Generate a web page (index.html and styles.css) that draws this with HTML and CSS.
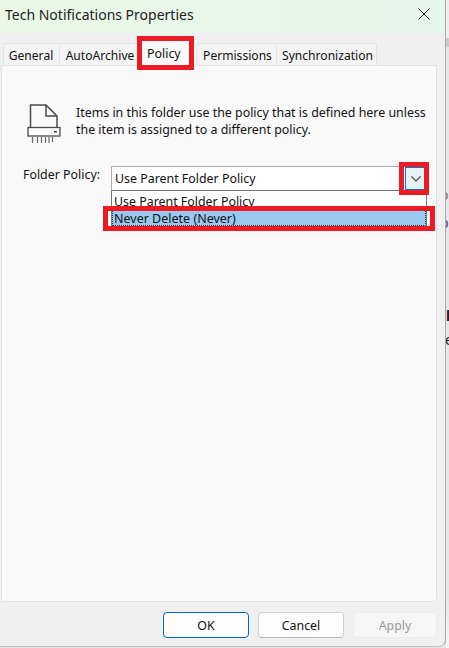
FILE: index.html
```html
<!DOCTYPE html>
<html lang="en">
<head>
    <meta charset="UTF-8">
    <title>Tech Notifications Properties</title>
    <link rel="stylesheet" href="styles.css">
</head>
<body>
    <div class="dialog">
        <div class="title-bar">
            <span class="title">Tech Notifications Properties</span>
            <svg class="close-icon" width="12" height="12" viewBox="0 0 12 12">
                <path d="M0.5 0.5L11.5 11.5M11.5 0.5L0.5 11.5" stroke="#1a1a1a" stroke-width="1" fill="none"/>
            </svg>
        </div>

        <div class="tabs">
            <div class="tab tab-general">General</div>
            <div class="tab tab-archive">AutoArchive</div>
            <div class="tab tab-active">Policy</div>
            <div class="tab tab-permissions">Permissions</div>
            <div class="tab tab-sync">Synchronization</div>
        </div>

        <div class="panel">
            <div class="info-row">
                <svg class="shredder-icon" width="34" height="40" viewBox="0 0 34 40">
                    <path d="M3.500 23V1H19L30 12V23" fill="none" stroke="#4a4a4a" stroke-width="1.5"/>
                    <path d="M19 1V12H30" fill="none" stroke="#4a4a4a" stroke-width="1.5"/>
                    <rect x="1" y="23.500" width="32" height="8.500" fill="#fff" stroke="#4a4a4a" stroke-width="1.3"/>
                    <rect x="27" y="27" width="3" height="1.500" fill="#4a4a4a"/>
                    <path d="M5.500 33V39M10.500 33V39M14.500 33V39M18.500 33V39M22 33V39M25.500 33V38" stroke="#6a6a6a" stroke-width="1.2" fill="none"/>
                </svg>
                <p class="info-text">Items in this folder use the policy that is defined here unless the item is assigned to a different policy.</p>
            </div>

            <div class="policy-row">
                <label class="policy-label">Folder Policy:</label>
                <div class="combo">
                    <div class="combo-box">
                        <span>Use Parent Folder Policy</span>
                        <span class="combo-button">
                            <svg width="10" height="6" viewBox="0 0 10 6">
                                <path d="M0.500 0.500L5 5L9.500 0.500" fill="none" stroke="#444" stroke-width="1.1"/>
                            </svg>
                        </span>
                    </div>
                    <div class="combo-list">
                        <div class="combo-option">Use Parent Folder Policy</div>
                        <div class="combo-option combo-selected">Never Delete (Never)</div>
                    </div>
                </div>
            </div>
        </div>

        <div class="buttons">
            <button class="btn btn-default">OK</button>
            <button class="btn">Cancel</button>
            <button class="btn btn-disabled">Apply</button>
        </div>

        <div class="mark mark-tab"></div>
        <div class="mark mark-arrow"></div>
        <div class="mark mark-option"></div>
    </div>

    <div class="behind">
        <div class="behind-bar"></div>
        <span class="behind-text behind-a">o</span>
        <span class="behind-text behind-b">b</span>
        <span class="behind-text behind-c">l</span>
        <span class="behind-text behind-d">e</span>
    </div>
</body>
</html>
```

FILE: styles.css
```css
html, body {
    margin: 0;
    padding: 0;
    height: 100%;
    overflow: hidden;
}
body {
    background-color: #e6e6e6;
    color: #111;
    font-family: "Noto Sans", sans-serif;
    font-size: 12.4px;
    display: flex;
}
.dialog {
    position: relative;
    width: 446px;
    height: 647px;
    box-sizing: border-box;
    background-color: #f0f0f0;
    border-right: 1px solid #a8a8a8;
    border-bottom: 1px solid #c4c4c4;
    border-bottom-right-radius: 7px;
    display: flex;
    flex-direction: column;
    flex-shrink: 0;
}

/* Title bar */
.title-bar {
    height: 33px;
    flex-shrink: 0;
    background: linear-gradient(90deg, #ebf8e8, #e6f6ec);
    display: flex;
    align-items: center;
    justify-content: space-between;
    padding: 0 15px 5px 5px;
    box-sizing: border-box;
}
.title {
    font-size: 14px;
    color: #222;
}

/* Tabs */
.tabs {
    display: flex;
    height: 32px;
    padding: 0 0 0 3px;
    box-sizing: border-box;
    flex-shrink: 0;
    position: relative;
    z-index: 1;
}
.tab {
    box-sizing: border-box;
    height: 22px;
    margin-top: 10px;
    font-size: 12.1px;
    line-height: 23px;
    text-align: center;
    background-color: #f4f4f4;
    border: 1px solid #e4e4e4;
    border-bottom: none;
    margin-right: -1px;
    color: #111;
}
.tab-general { width: 57px; padding-right: 1px; }
.tab-archive { width: 79px; padding-left: 3px; }
.tab-active {
    width: 60px;
    height: 26px;
    margin-top: 7px;
    font-size: 12.4px;
    line-height: 28px;
    padding-left: 10px;
    text-align: left;
    background-color: #f9f9f9;
    border: none;
}
.tab-permissions { width: 81px; padding-left: 2px; }
.tab-sync { width: 101px; padding-left: 2px; }

/* Panel */
.panel {
    flex: 1;
    margin: 0 8px 0 1px;
    background-color: #f9f9f9;
    border: 1px solid #e2e2e2;
    border-bottom-right-radius: 3px;
    padding: 38px 0 0 21px;
}
.info-row {
    display: flex;
    align-items: flex-start;
    gap: 15px;
    margin: 0 0 22px 4px;
}
.shredder-icon {
    flex-shrink: 0;
}
.info-text {
    margin: 0;
    line-height: 17px;
    width: 352px;
}
.policy-row {
    display: flex;
    align-items: flex-start;
}
.policy-label {
    width: 88px;
    flex-shrink: 0;
    line-height: 16px;
    margin-top: 1px;
}

/* Combo box */
.combo {
    width: 316px;
}
.combo-box {
    height: 25px;
    box-sizing: border-box;
    background-color: #fff;
    border: 1px solid #acacac;
    border-bottom-color: #777;
    padding: 0 0 0 3px;
    display: flex;
    align-items: center;
    justify-content: space-between;
}
.combo-button {
    width: 21px;
    height: 23px;
    box-sizing: border-box;
    background-color: #e5f1fb;
    border: 1px solid #0078d4;
    display: flex;
    align-items: center;
    justify-content: center;
}
.combo-list {
    background-color: #fff;
    border-left: 1px solid #777;
    border-right: 1px solid #777;
}
.combo-option {
    height: 19px;
    line-height: 22px;
    padding-left: 2px;
}
.combo-selected {
    height: 16px;
    line-height: 18px;
    font-size: 12.5px;
    background-color: #99c9ef;
    outline: 1px dotted #333;
    outline-offset: -1px;
}

/* Buttons */
.buttons {
    height: 44px;
    flex-shrink: 0;
    display: flex;
    justify-content: flex-end;
    gap: 9px;
    padding: 10px 8px 0 0;
    box-sizing: border-box;
}
.btn {
    width: 86px;
    height: 26px;
    box-sizing: border-box;
    font-family: "Noto Sans", sans-serif;
    font-size: 12.4px;
    color: #111;
    background-color: #fdfdfd;
    border: 1px solid #d0d0d0;
    border-bottom-color: #b8b8b8;
    border-radius: 4px;
    padding: 0;
}
.btn-default {
    border: 1px solid #0067c0;
}
.btn-disabled {
    width: 84px;
    color: #9a9a9a;
    background-color: #f6f6f6;
    border-color: #ececec;
}

/* Red annotation boxes drawn over the screenshot */
.mark {
    position: absolute;
    box-sizing: border-box;
    border: 5px solid #ed1c24;
    z-index: 2;
}
.mark-tab { left: 137px; top: 36px; width: 57px; height: 34px; }
.mark-arrow { left: 399px; top: 162px; width: 30px; height: 33px; }
.mark-option { left: 103px; top: 206px; width: 332px; height: 25px; }

/* Bits of the window behind the dialog */
.behind {
    flex: 1;
    position: relative;
    overflow: hidden;
    background: linear-gradient(#eeeeee 38px, #e6e6e6 38px, #e6e6e6 600px, #f4f4f4 640px);
}
.behind-bar {
    height: 9px;
    margin-top: 38px;
    background-color: #cccccc;
}
.behind-text {
    position: absolute;
    left: 0;
    font-size: 14px;
    line-height: 16px;
    color: #222;
}
.behind-a { top: 187px; left: -6px; color: #8a6a50; }
.behind-b { top: 215px; left: -6px; color: #3b4a78; }
.behind-c { top: 308px; left: 0; font-weight: bold; }
.behind-d { top: 332px; left: -1px; }
```
